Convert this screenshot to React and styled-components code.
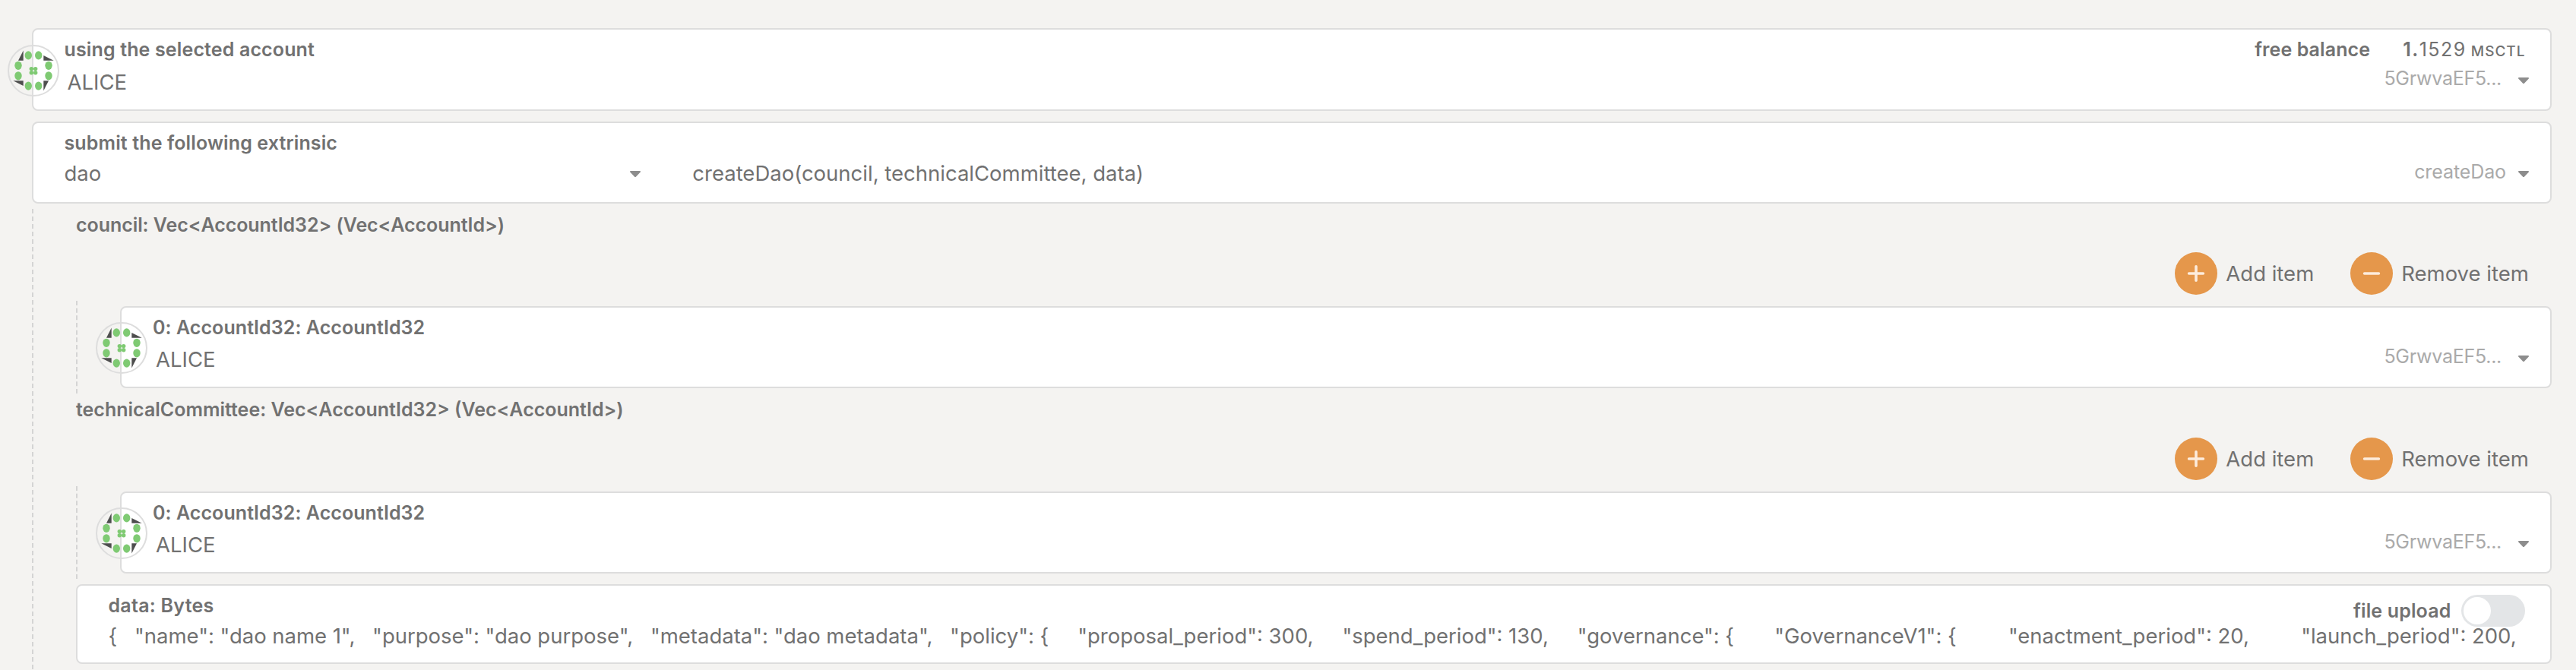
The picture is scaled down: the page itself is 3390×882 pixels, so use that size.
import React from "react";
import styled, { createGlobalStyle } from "styled-components";

const Global = createGlobalStyle`
  * { box-sizing: border-box; }
  body { margin: 0; background: #f4f3f1; }
`;

const Page = styled.main`
  height: 882px;
  padding: 37px 32px 0 42px;
  overflow: hidden;
  background: #f4f3f1;
  color: #717171;
  font-family: Inter, "Noto Sans", sans-serif;
  font-size: 27.5px;
  line-height: 34px;
`;

const Card = styled.section`
  position: relative;
  height: ${(p) => p.$height || 108}px;
  margin-bottom: ${(p) => p.$after || 0}px;
  padding: 10.6px 0 0 ${(p) => p.$inset || 40.5}px;
  background: #fff;
  border: 2px solid #dddddd;
  border-radius: 8px;
`;

const Header = styled.header`
  display: flex;
  justify-content: space-between;
  align-items: flex-start;
  height: 30px;
`;

const Label = styled.span`
  display: block;
  font-size: 25px;
  font-weight: 600;
  line-height: 30px;
  letter-spacing: ${(p) => p.$track || 0}px;
  white-space: nowrap;
`;

const Body = styled.div`
  display: flex;
  justify-content: space-between;
  align-items: flex-start;
  padding: 6px 28px 0 0;
`;

const AccountName = styled.span`
  padding: ${(p) => p.$drop}px 0 0 4px;
`;

const Picker = styled.div`
  display: flex;
  gap: ${(p) => p.$gap}px;
`;

const Hint = styled.span`
  color: #aaaaaa;
  font-size: 25px;
  letter-spacing: ${(p) => p.$track}px;
`;

const CaretSvg = styled.svg`
  width: 14px;
  height: 8px;
  margin-top: 16.4px;
  flex: none;
`;

const Caret = () => (
  <CaretSvg viewBox="0 0 14 8">
    <path d="M1.2 0H12.8C13.9 0 14.3 1 13.6 1.8L8.1 7.4C7.5 8.1 6.5 8.1 5.9 7.4L0.4 1.8C-0.3 1 0.1 0 1.2 0Z" fill="#8d8d8d" />
  </CaretSvg>
);

const AvatarFrame = styled.svg`
  position: absolute;
  left: -34px;
  top: ${(p) => p.$top}px;
  width: 68px;
  height: 68px;
`;

const dots = [
  [-6.7, -20.1], [6.7, -20.1], [20, -6.7], [20, 6.8],
  [6.7, 20.1], [-6.7, 20.1], [-20, 6.8], [-20, -6.7],
];
const petals = [[-2.7, -2.4], [2.7, -2.4], [-2.7, 2.7], [2.7, 2.7]];

const Avatar = ({ top }) => (
  <AvatarFrame viewBox="-34 -34 68 68" $top={top}>
    <circle r="33" fill="none" stroke="#dddddd" strokeWidth="2" />
    <g fill="#4e4e4e">
      <path d="M-13.3-26.5V-13.3H-20Z" />
      <path d="M13.3-20V-13.3H26.7Z" />
      <path d="M13.3 13.2H20L13.3 26.5Z" />
      <path d="M-26.7 13.2H-13.3V20Z" />
    </g>
    <g fill="#7fca73">
      {dots.map(([x, y]) => (
        <ellipse key={`${x},${y}`} cx={x} cy={y} rx="4.7" ry="5.6" />
      ))}
      {petals.map(([x, y]) => (
        <circle key={`${x},${y}`} cx={x} cy={y} r="2.7" />
      ))}
    </g>
  </AvatarFrame>
);

const Balance = styled.div`
  display: flex;
  margin: 0.8px 32.5px 0 0;
  font-size: 25px;
  line-height: 30px;
`;

const Whole = styled.span`
  margin-left: 43px;
  font-weight: 600;
  letter-spacing: 1.5px;
`;

const Decimals = styled.span`
  letter-spacing: 1.5px;
`;

const Unit = styled.span`
  margin-left: 6px;
  padding-top: 2.4px;
  font-size: 19px;
  font-weight: 500;
  letter-spacing: 1px;
`;

const SectionSelect = styled.div`
  display: flex;
  justify-content: space-between;
  width: 758.5px;
  margin-right: 68.3px;
`;

const SelectText = styled.span`
  padding-top: 2.6px;
`;

const MethodSelect = styled.div`
  display: flex;
  justify-content: space-between;
  flex: 1;
`;

const Params = styled.div`
  height: 626px;
  padding-left: 56px;
  border-left: 2px dashed #d4d4d4;
`;

const Group = styled.section`
  padding-top: 6px;
`;

const ButtonRow = styled.div`
  display: flex;
  justify-content: flex-end;
  gap: 48px;
  margin-top: ${(p) => p.$space}px;
  padding-right: 30.2px;
`;

const Button = styled.button`
  display: flex;
  align-items: center;
  gap: 11px;
  height: 56px;
  padding: 0;
  border: 0;
  background: none;
  color: inherit;
  font: inherit;
  white-space: nowrap;
`;

const IconDisc = styled.span`
  display: flex;
  align-items: center;
  justify-content: center;
  width: 56px;
  height: 56px;
  border-radius: 50%;
  background: #e5974b;
`;

const ActionButton = ({ kind, children }) => (
  <Button type="button">
    <IconDisc>
      <svg width="24" height="24" viewBox="0 0 24 24" stroke="#fdecdc" strokeWidth="3.6" strokeLinecap="round">
        <path d={kind === "add" ? "M2.6 12H21.4M12 2.8V21.2" : "M2.6 12H21.4"} />
      </svg>
    </IconDisc>
    {children}
  </Button>
);

const Items = styled.div`
  height: 122px;
  margin-top: 8px;
  padding: 7px 0 7px 56px;
  border-left: 2px dashed #d4d4d4;
`;

const DataParam = styled.div`
  padding-top: 7px;
`;

const Upload = styled.div`
  display: flex;
  gap: 13.5px;
  margin-right: 33px;
`;

const UploadLabel = styled(Label)`
  margin-top: 7px;
`;

const Toggle = styled.span`
  display: flex;
  align-items: center;
  width: 84px;
  height: 42px;
  margin-top: 1.4px;
  padding-left: 3px;
  border-radius: 21px;
  background: #e3e5e7;
`;

const Knob = styled.span`
  width: 36px;
  height: 36px;
  border-radius: 50%;
  background: #fff;
`;

const DataLine = styled.div`
  position: relative;
  margin-top: 8px;
  white-space: pre;
  word-spacing: -0.15px;
`;

const AddressPicker = () => (
  <Picker $gap={22}>
    <Hint $track={-0.27}>5GrwvaEF5...</Hint>
    <Caret />
  </Picker>
);

const AccountBody = ({ drop }) => (
  <Body>
    <AccountName $drop={drop}>ALICE</AccountName>
    <AddressPicker />
  </Body>
);

const VecParam = ({ title, track, space }) => (
  <Group>
    <Label $track={track}>{title}</Label>
    <ButtonRow $space={space}>
      <ActionButton kind="add">Add item</ActionButton>
      <ActionButton kind="remove">Remove item</ActionButton>
    </ButtonRow>
    <Items>
      <Card $inset={41}>
        <Avatar top={19} />
        <Header>
          <Label $track={0.07}>0: AccountId32: AccountId32</Label>
        </Header>
        <AccountBody drop={4.4} />
      </Card>
    </Items>
  </Group>
);

const data =
  '{   "name": "dao name 1",   "purpose": "dao purpose",   "metadata": "dao metadata",   "policy": {     "proposal_period": 300,     "spend_period": 130,     "governance": {       "GovernanceV1": {         "enactment_period": 20,         "launch_period": 200,';

export default function App() {
  return (
    <Page>
      <Global />
      <Card $height={109} $after={14}>
        <Avatar top={20} />
        <Header>
          <Label $track={0.14}>using the selected account</Label>
          <Balance>
            <Label $track={0.1}>free balance</Label>
            <Whole>1.</Whole>
            <Decimals>1529</Decimals>
            <Unit>MSCTL</Unit>
          </Balance>
        </Header>
        <AccountBody drop={5} />
      </Card>
      <Card $after={7}>
        <Header>
          <Label $track={0.13}>submit the following extrinsic</Label>
        </Header>
        <Body>
          <SectionSelect>
            <SelectText>dao</SelectText>
            <Caret />
          </SectionSelect>
          <MethodSelect>
            <SelectText>createDao(council, technicalCommittee, data)</SelectText>
            <Picker $gap={16}>
              <Hint $track={-0.1}>createDao</Hint>
              <Caret />
            </Picker>
          </MethodSelect>
        </Body>
      </Card>
      <Params>
        <VecParam title="council: Vec<AccountId32> (Vec<AccountId>)" track={-0.06} space={21} />
        <VecParam title="technicalCommittee: Vec<AccountId32> (Vec<AccountId>)" track={0} space={22} />
        <DataParam>
          <Card $height={105}>
            <Header>
              <Label $track={0.25}>data: Bytes</Label>
              <Upload>
                <UploadLabel $track={0.15}>file upload</UploadLabel>
                <Toggle>
                  <Knob />
                </Toggle>
              </Upload>
            </Header>
            <DataLine>{data}</DataLine>
          </Card>
        </DataParam>
      </Params>
    </Page>
  );
}
